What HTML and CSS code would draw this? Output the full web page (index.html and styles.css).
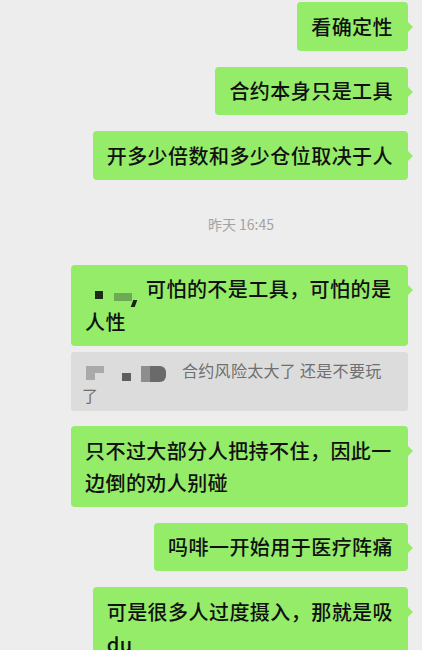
FILE: index.html
```html
<!DOCTYPE html>
<html lang="zh">
<head>
<meta charset="utf-8">
<link rel="stylesheet" href="styles.css">
</head>
<body>
<div class="chat">
  <div class="msg b1"><div class="bubble">看确定性</div></div>
  <div class="msg"><div class="bubble">合约本身只是工具</div></div>
  <div class="msg"><div class="bubble">开多少倍数和多少仓位取决于人</div></div>
  <div class="time">昨天 16:45</div>
  <div class="msg b4">
    <div class="bubble wide"><span class="redact"><span class="r-sq"></span><span class="r-bar"></span><span class="r-comma"></span></span>可怕的不是工具，可怕的是人性</div>
    <div class="quote"><span class="qredact"><span class="q1"></span><span class="q2"></span><span class="q3"></span></span>合约风险太大了 还是不要玩了</div>
  </div>
  <div class="msg"><div class="bubble wide">只不过大部分人把持不住，因此一边倒的劝人别碰</div></div>
  <div class="msg"><div class="bubble">吗啡一开始用于医疗阵痛</div></div>
  <div class="msg"><div class="bubble">可是很多人过度摄入，那就是吸<br>du</div></div>
</div>
</body>
</html>
```

FILE: styles.css
```css
html, body {
  margin: 0;
  padding: 0;
  background: #ededed;
}
body {
  font-family: "Noto Sans CJK SC", "Noto Sans", sans-serif;
  color: #111;
  overflow: hidden;
}
.chat {
  display: flex;
  flex-direction: column;
  align-items: flex-end;
  padding: 2px 14px 0 0;
}
.msg {
  display: flex;
  flex-direction: column;
  align-items: flex-end;
  margin-bottom: 16px;
}
.bubble {
  position: relative;
  background: #95ec69;
  border-radius: 4px;
  font-size: 20px;
  font-weight: 500;
  letter-spacing: 0.45px;
  line-height: 32px;
  padding: 8.5px 15px 8px 14px;
  max-width: 308px;
  box-sizing: content-box;
}
.bubble::after {
  content: "";
  position: absolute;
  right: -5px;
  top: 19px;
  border-style: solid;
  border-width: 6px 0 6px 6px;
  border-color: transparent transparent transparent #95ec69;
}
.time {
  align-self: center;
  margin: 18px 0 31px 74px;
  font-size: 14px;
  color: #a3a3a3;
  line-height: 20px;
}
.redact {
  display: inline-flex;
  align-items: flex-start;
  width: 61px;
  height: 20px;
  vertical-align: -2px;
}
.r-sq {
  width: 8px;
  height: 8px;
  margin: 5px 0 0 10px;
  background: #1b2a15;
}
.r-bar {
  width: 18px;
  height: 8px;
  margin: 7px 0 0 11px;
  background: #6eaa56;
}
.r-comma {
  width: 4px;
  height: 7px;
  margin: 14px 0 0 0;
  background: #17240f;
  transform: skewX(-20deg);
}
.b4 {
  margin-bottom: 15px;
}
.b4 .bubble {
  width: 308px;
}
.quote {
  margin-top: 6px;
  width: 337px;
  box-sizing: border-box;
  background: #dcdcdc;
  border-radius: 3px;
  color: #6f6f6f;
  font-size: 16px;
  letter-spacing: 0.3px;
  line-height: 24px;
  padding: 6px 15px 4px 11px;
}
.qredact {
  display: inline-flex;
  align-items: flex-start;
  width: 100px;
  height: 18px;
  vertical-align: -3px;
}
.q1 {
  width: 18px;
  height: 14px;
  margin: 1px 0 0 4px;
  background: linear-gradient(to bottom, #a9a9a9 0 50%, transparent 50%),
              linear-gradient(to right, #a9a9a9 0 50%, transparent 50%);
}
.q2 {
  width: 9px;
  height: 8px;
  margin: 8px 0 0 18px;
  background: #5e5e5e;
}
.q3 {
  width: 25px;
  height: 16px;
  margin: 1px 0 0 10px;
  background: linear-gradient(to right, #8d8d8d 0 35%, #6a6a6a 35%);
  border-radius: 0 6px 6px 0;
}
```
